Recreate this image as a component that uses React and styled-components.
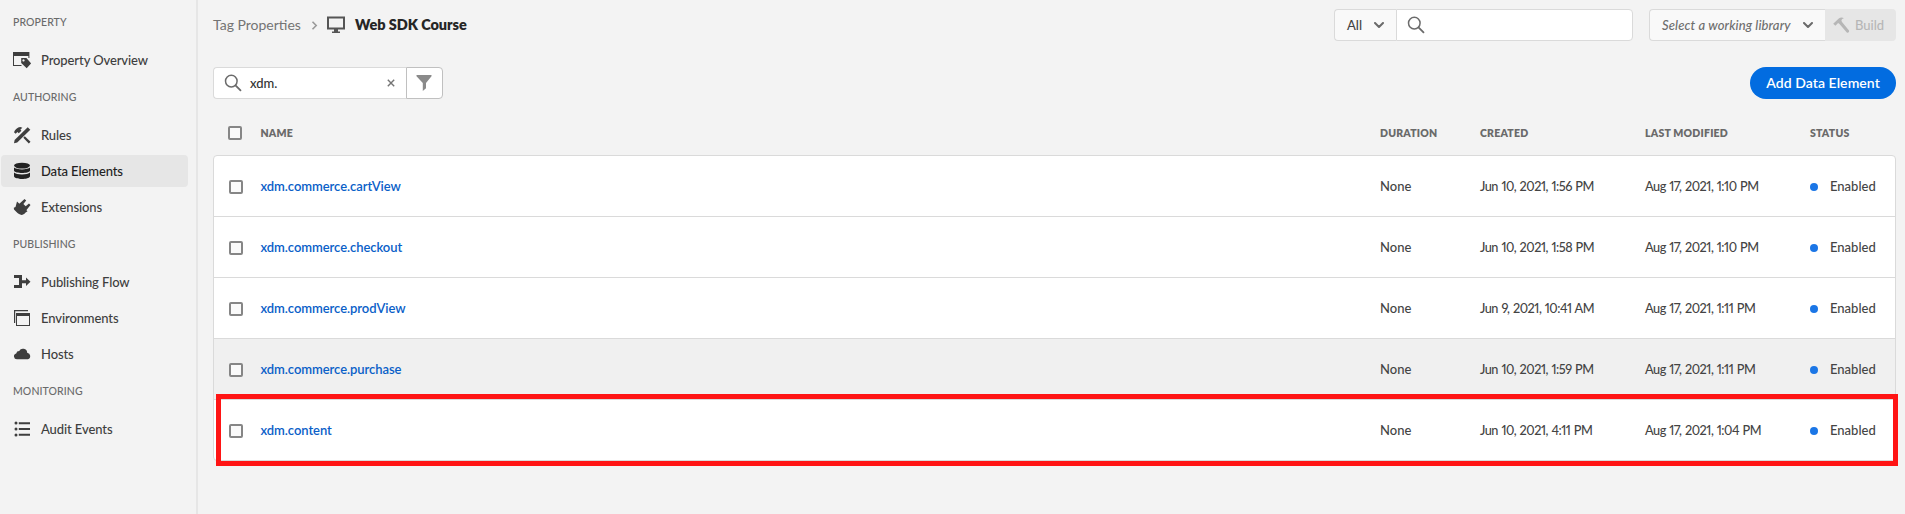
import React from 'react';
import styled, { createGlobalStyle, css } from 'styled-components';

const GlobalStyle = createGlobalStyle`
  * { box-sizing: border-box; }
  body {
    margin: 0;
    background: #f3f3f3;
    color: #444;
    font: 500 13px/18px Lato, "Liberation Sans", sans-serif;
    overflow: hidden;
  }
`;

const Shell = styled.div`
  display: flex;
  height: 514px;
`;

const Sidebar = styled.nav`
  flex: none;
  width: 198px;
  padding: 1px 9px 0 1px;
  border-right: 2px solid #e6e6e6;
`;

const NavHeading = styled.h2`
  margin: 0;
  padding-left: 12px;
  height: 43px;
  line-height: 42px;
  font-size: 10.5px;
  font-weight: 500;
  letter-spacing: 0.08px;
  color: #6a6a6a;
`;

const NavList = styled.ul`
  margin: 0;
  padding: 0;
  list-style: none;
  display: flex;
  flex-direction: column;
  gap: 4px;
`;

const NavItem = styled.li`
  display: flex;
  align-items: center;
  gap: 10px;
  width: 187px;
  height: 32px;
  padding-left: 12px;
  border-radius: 4px;
  letter-spacing: -0.1px;
  color: ${(p) => (p.$active ? '#222' : '#3e3e3e')};
  background: ${(p) => (p.$active ? '#e6e6e6' : 'transparent')};
`;

const Icon = styled.svg`
  flex: none;
  display: block;
  width: ${(p) => p.$w || 18}px;
  height: ${(p) => p.$h || 18}px;
  fill: currentColor;
`;

const Main = styled.main`
  flex: 1;
  min-width: 0;
  padding: 9px 9px 0 15px;
`;

const Bar = styled.div`
  display: flex;
  align-items: center;
  justify-content: space-between;
  height: 32px;
`;

const FilterBar = styled(Bar)`
  margin-top: 26px;
`;

const Group = styled.div`
  display: flex;
  align-items: center;
`;

const Crumb = styled.a`
  font-size: 14px;
  font-weight: 400;
  color: #747474;
`;

const CrumbCurrent = styled.h1`
  margin: 0 0 0 10px;
  font-size: 14.5px;
  line-height: 18px;
  font-weight: 800;
  letter-spacing: -0.05px;
  color: #262626;
`;

const CrumbArrow = styled(Icon)`
  margin: 0 9px 0 10px;
  color: #999;
`;

const Monitor = styled(Icon)`
  color: #555;
`;

const boxed = css`
  display: flex;
  align-items: center;
  height: 32px;
  border: 1px solid #dadada;
`;

const ScopePicker = styled.div`
  ${boxed}
  width: 62px;
  padding-left: 12px;
  gap: 12px;
  border-right: 0;
  border-radius: 4px 0 0 4px;
  background: #f9f9f9;
`;

const SearchBox = styled.div`
  ${boxed}
  width: ${(p) => p.$w}px;
  padding: 0 11px 0 10px;
  background: #fff;
  border-radius: ${(p) => (p.$joinLeft ? '0 4px 4px 0' : '4px 0 0 4px')};
  ${(p) => !p.$joinLeft && 'border-right: 0;'}
`;

const Query = styled.span`
  flex: 1;
  margin-left: 8px;
  color: #323232;
`;

const FilterButton = styled.button`
  ${boxed}
  justify-content: center;
  width: 37px;
  padding: 0 1px 0 0;
  border-color: #c0c0c0;
  border-radius: 0 4px 4px 0;
  background: #fff;
  color: #8a8a8a;
`;

const LibraryPicker = styled.div`
  ${boxed}
  width: 176px;
  margin-left: 16px;
  padding: 0 12px;
  justify-content: space-between;
  border-right: 0;
  border-radius: 4px 0 0 4px;
  background: #f9f9f9;
  color: #6e6e6e;
  font-style: italic;
  letter-spacing: 0.12px;
  white-space: nowrap;
`;

const BuildButton = styled.button`
  display: flex;
  align-items: center;
  gap: 5px;
  width: 71px;
  height: 32px;
  padding: 0 0 0 8px;
  border: 0;
  border-radius: 0 4px 4px 0;
  background: #e6e6e6;
  color: #b6b6b6;
  font: 500 13px/18px Lato, sans-serif;
`;

const PrimaryButton = styled.button`
  width: 146px;
  height: 32px;
  padding: 0;
  border: 0;
  border-radius: 16px;
  background: #026ce0;
  color: #fff;
  font: 600 14px/18px Lato, sans-serif;
  letter-spacing: 0.07px;
`;

const columns = css`
  display: grid;
  grid-template-columns: 46.500px 1fr 100px 165px 165px 85px;
  align-items: center;
`;

const TableHead = styled.div`
  ${columns}
  height: 56px;
  padding: 11px 1px 0;
  font-size: 10.5px;
  font-weight: 800;
  letter-spacing: 0.2px;
  color: #6a6a6a;
`;

const TableBody = styled.div`
  height: 306px;
  border: 1px solid #dadada;
  border-radius: 4px;
  background: #fff;
`;

const Row = styled.div`
  ${columns}
  position: relative;
  height: 61px;
  border-bottom: 1px solid #dadada;
  background: ${(p) => (p.$hovered ? '#f0f0f0' : 'transparent')};
  &:last-child { height: 60px; border-bottom: 0; }
`;

const Highlight = styled.div`
  position: absolute;
  inset: -6px -3px -6px 2px;
  border: 5px solid #ff1414;
`;

const Checkbox = styled.span`
  width: 14px;
  height: 14px;
  margin: ${(p) => (p.$head ? '1px 0 0 14px' : '2px 0 0 15px')};
  border: 2px solid #868686;
  border-radius: 2px;
  background: #fafafa;
`;

const ItemLink = styled.a`
  color: #0a60c8;
  font-weight: 600;
  letter-spacing: -0.06px;
`;

const DateText = styled.span`
  font-size: 12.7px;
  font-variant-numeric: proportional-nums;
  letter-spacing: -0.48px;
  word-spacing: 0.700px;
  white-space: nowrap;
`;

const Status = styled.span`
  display: flex;
  align-items: center;
  gap: 12px;
  &::before {
    content: '';
    width: 8px;
    height: 8px;
    margin-top: 2px;
    border-radius: 50%;
    background: #1b76e6;
  }
`;

const icons = {
  overview: (
    <>
      <path d="M0 1h16.400v6h-1V5H1v9h7.500v1H0z" />
      <path fillRule="evenodd" d="M8.200 7h5.200l4.800 5.400-4.500 4.800L8.200 11.900zM10.500 8.300a1.100 1.100 0 1 0 .01 0z" />
    </>
  ),
  rules: (
    <>
      <path d="M14.700 1.200l2.600 2.500L4.200 16.500 1 17.200l.6-3.100z" />
      <path d="M1 6.300C2 3.500 4.500 1.200 7.200 1l2.200.7-2 1.700 1 1.300-2.600 2.500-1.400-1.300-1.700 1.800z" />
      <path d="M10.300 11.700l1.500-1.500 5.700 5.500-1.700 1.700z" />
    </>
  ),
  data: (
    <>
      <ellipse cx="9" cy="3.600" rx="8" ry="2.900" />
      <path d="M1 5.600c2 2.400 14 2.400 16 0v3.100c-1 3-15 3-16 0z" />
      <path d="M1 10.500c2 2.500 14 2.500 16 0v3.700c-1 3.700-15 3.700-16 0z" />
    </>
  ),
  extensions: (
    <>
      <path d="M4 3.500L14.500 13.300l-2.200 1.500c-1.500 2-4 2.900-6.300 1.300L4.500 15 1 11.500.8 9.700 2.500 9z" />
      <path d="M5.500 6.500L11.500 1l1.700 1.500-2.800 3.400 2.300 2.400 3.300-2.700 1.500 1.500-5 6.200z" />
    </>
  ),
  flow: <path d="M1 2h8v5.300h4V4.400l4.500 4.300-4.500 4.300v-2.800H9V15H1v-3h5V5H1z" />,
  environments: (
    <>
      <path d="M1 1h14v1.300H2.200V14H1z" />
      <path fillRule="evenodd" d="M3 4h14v13H3zm1 3v9h12V7z" />
    </>
  ),
  hosts: <path d="M4 14.300a3 3 0 0 1-.8-5.900 3 3 0 0 1 3-2.300 4.200 4.200 0 0 1 8 1.600 3.400 3.400 0 0 1 .7 6.600z" />,
  audit: (
    <>
      <path d="M5.800 2.200H17v2H5.800zM5.800 8H17v2H5.800zM5.800 13.800H17v2H5.800z" />
      <circle cx="3" cy="3" r="1.500" />
      <circle cx="3" cy="9" r="1.500" />
      <circle cx="3" cy="15" r="1.500" />
    </>
  ),
};

const sections = [
  { title: 'PROPERTY', items: [['overview', 'Property Overview']] },
  { title: 'AUTHORING', items: [['rules', 'Rules'], ['data', 'Data Elements', true], ['extensions', 'Extensions']] },
  { title: 'PUBLISHING', items: [['flow', 'Publishing Flow'], ['environments', 'Environments'], ['hosts', 'Hosts']] },
  { title: 'MONITORING', items: [['audit', 'Audit Events']] },
];

const rows = [
  { name: 'xdm.commerce.cartView', created: 'Jun 10, 2021, 1:56 PM', modified: 'Aug 17, 2021, 1:10 PM' },
  { name: 'xdm.commerce.checkout', created: 'Jun 10, 2021, 1:58 PM', modified: 'Aug 17, 2021, 1:10 PM' },
  { name: 'xdm.commerce.prodView', created: 'Jun 9, 2021, 10:41 AM', modified: 'Aug 17, 2021, 1:11 PM' },
  { name: 'xdm.commerce.purchase', created: 'Jun 10, 2021, 1:59 PM', modified: 'Aug 17, 2021, 1:11 PM', hovered: true },
  { name: 'xdm.content', created: 'Jun 10, 2021, 4:11 PM', modified: 'Aug 17, 2021, 1:04 PM', highlighted: true },
];

const stroke = { fill: 'none', stroke: 'currentColor' };

const SearchGlyph = styled(Icon)`
  color: #6b6b6b;
`;

const SearchIcon = () => (
  <SearchGlyph viewBox="0 0 18 18">
    <circle cx="7.300" cy="7.100" r="5.800" {...stroke} strokeWidth="1.500" />
    <path d="M11.500 11.300l5 5.100" {...stroke} strokeWidth="1.800" strokeLinecap="round" />
  </SearchGlyph>
);

const Chevron = () => (
  <Icon viewBox="0 0 10 6" $w={10} $h={6}>
    <path d="M1 1l4 4 4-4" {...stroke} stroke="#6b6b6b" strokeWidth="2" strokeLinecap="round" strokeLinejoin="round" />
  </Icon>
);

export default function App() {
  return (
    <>
      <GlobalStyle />
      <Shell>
        <Sidebar>
          {sections.map((section) => (
            <section key={section.title}>
              <NavHeading>{section.title}</NavHeading>
              <NavList>
                {section.items.map(([icon, label, active]) => (
                  <NavItem key={label} $active={active}>
                    <Icon viewBox="0 0 18 18">{icons[icon]}</Icon>
                    {label}
                  </NavItem>
                ))}
              </NavList>
            </section>
          ))}
        </Sidebar>
        <Main>
          <Bar>
            <Group>
              <Crumb>Tag Properties</Crumb>
              <CrumbArrow viewBox="0 0 7 9" $w={7} $h={9}>
                <path d="M1.500.8L5.200 4.500 1.500 8.200" {...stroke} strokeWidth="1.600" />
              </CrumbArrow>
              <Monitor viewBox="0 0 18 18">
                <path fillRule="evenodd" d="M0 .5h18v13h-7v2h2v1.500H5v-1.500h2v-2H0zm2 2v9h14v-9z" />
              </Monitor>
              <CrumbCurrent>Web SDK Course</CrumbCurrent>
            </Group>
            <Group>
              <ScopePicker>All <Chevron /></ScopePicker>
              <SearchBox $w={237} $joinLeft><SearchIcon /></SearchBox>
              <LibraryPicker>Select a working library <Chevron /></LibraryPicker>
              <BuildButton>
                <Icon viewBox="0 0 17 17" $w={17} $h={17}>
                  <path d="M.2 6.800L5.800 1.500C7.200.3 9.300.2 11 1.200 9.600 1.500 8.700 2.400 8.400 3.600l.6 1.300 7 8.600c.6 1.400-.9 2.700-2.200 1.900L6.500 6.900 5.100 6.100 2.400 8.700z" />
                </Icon>
                Build
              </BuildButton>
            </Group>
          </Bar>
          <FilterBar>
            <Group>
              <SearchBox $w={193}>
                <SearchIcon />
                <Query>xdm.</Query>
                <Icon viewBox="0 0 8 8" $w={8} $h={8}>
                  <path d="M.8.8l6.400 6.400M7.200.8L.8 7.200" {...stroke} stroke="#747474" strokeWidth="1.400" />
                </Icon>
              </SearchBox>
              <FilterButton>
                <Icon viewBox="0 0 18 18">
                  <path d="M1.500 1h15v1.300L11 9v5.200L7.800 17V9L1.500 2.300z" />
                </Icon>
              </FilterButton>
            </Group>
            <PrimaryButton>Add Data Element</PrimaryButton>
          </FilterBar>
          <TableHead>
            <Checkbox $head />
            <span>NAME</span>
            <span>DURATION</span>
            <span>CREATED</span>
            <span>LAST MODIFIED</span>
            <span>STATUS</span>
          </TableHead>
          <TableBody>
            {rows.map((row) => (
              <Row key={row.name} $hovered={row.hovered}>
                <Checkbox />
                <ItemLink>{row.name}</ItemLink>
                <span>None</span>
                <DateText>{row.created}</DateText>
                <DateText>{row.modified}</DateText>
                <Status>Enabled</Status>
                {row.highlighted && <Highlight />}
              </Row>
            ))}
          </TableBody>
        </Main>
      </Shell>
    </>
  );
}
